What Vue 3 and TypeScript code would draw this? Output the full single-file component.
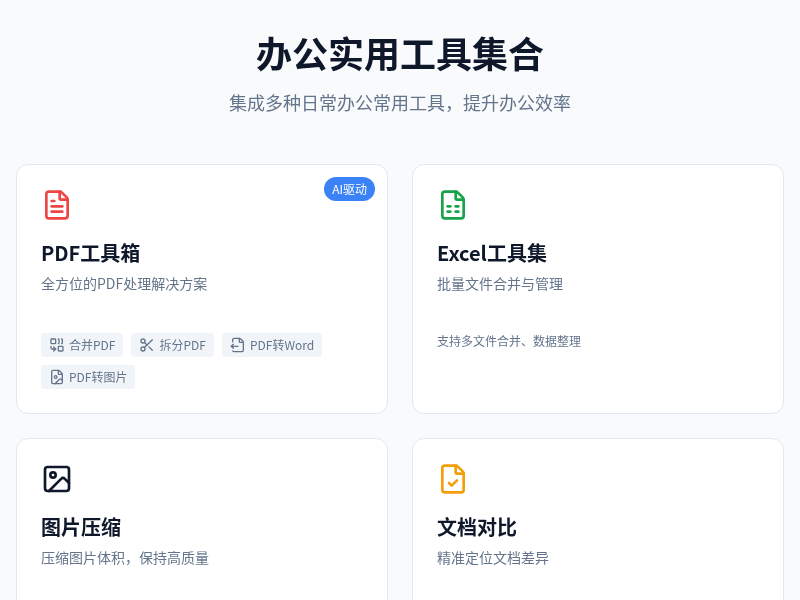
<script setup lang="ts">
interface Tag { label: string; icon: string }
interface Tool { title: string; desc: string; color: string; icon: string; badge?: string; tags?: Tag[]; note?: string }

const doc = '<path d="M6 22a2 2 0 0 1-2-2V4a2 2 0 0 1 2-2h8a2.4 2.4 0 0 1 1.704.706l3.59 3.588A2.4 2.4 0 0 1 20 8v12a2 2 0 0 1-2 2z"/><path d="M14 2v5a1 1 0 0 0 1 1h5"/>'

const tools: Tool[] = [
  {
    title: 'PDF工具箱',
    desc: '全方位的PDF处理解决方案',
    color: '#ef4444',
    badge: 'AI驱动',
    icon: doc + '<path d="M10 9H8"/><path d="M16 13H8"/><path d="M16 17H8"/>',
    tags: [
      { label: '合并PDF', icon: '<path d="M14 3a1 1 0 0 1 1 1v5a1 1 0 0 1-1 1"/><path d="M19 3a1 1 0 0 1 1 1v5a1 1 0 0 1-1 1"/><path d="m7 15 3 3"/><path d="m7 21 3-3H5a2 2 0 0 1-2-2v-2"/><rect x="14" y="14" width="7" height="7" rx="1"/><rect x="3" y="3" width="7" height="7" rx="1"/>' },
      { label: '拆分PDF', icon: '<circle cx="6" cy="6" r="3"/><path d="M8.12 8.12 12 12"/><path d="M20 4 8.12 15.88"/><circle cx="6" cy="18" r="3"/><path d="M14.8 14.8 20 20"/>' },
      { label: 'PDF转Word', icon: '<path d="M4.226 20.925A2 2 0 0 0 6 22h12a2 2 0 0 0 2-2V8a2.4 2.4 0 0 0-.706-1.706l-3.588-3.588A2.4 2.4 0 0 0 14 2H6a2 2 0 0 0-2 2v3.127"/><path d="M14 2v5a1 1 0 0 0 1 1h5"/><path d="m5 11-3 3"/><path d="m5 17-3-3h10"/>' },
      { label: 'PDF转图片', icon: doc + '<circle cx="10" cy="12" r="2"/><path d="m20 17-1.296-1.296a2.41 2.41 0 0 0-3.408 0L9 22"/>' },
    ],
  },
  {
    title: 'Excel工具集',
    desc: '批量文件合并与管理',
    color: '#16a34a',
    icon: doc + '<path d="M8 13h2"/><path d="M14 13h2"/><path d="M8 17h2"/><path d="M14 17h2"/>',
    note: '支持多文件合并、数据整理',
  },
  {
    title: '图片压缩',
    desc: '压缩图片体积，保持高质量',
    color: '#0f172a',
    icon: '<rect x="3" y="3" width="18" height="18" rx="2"/><circle cx="9" cy="9" r="2"/><path d="m21 15-3.086-3.086a2 2 0 0 0-2.828 0L6 21"/>',
  },
  {
    title: '文档对比',
    desc: '精准定位文档差异',
    color: '#f59e0b',
    icon: doc + '<path d="m9 15 2 2 4-4"/>',
  },
]
</script>

<template>
  <main class="page">
    <header class="head">
      <h1>办公实用工具集合</h1>
      <p>集成多种日常办公常用工具，提升办公效率</p>
    </header>
    <section class="grid">
      <article v-for="t in tools" :key="t.title" class="card">
        <span v-if="t.badge" class="badge">{{ t.badge }}</span>
        <svg class="icon" width="32" height="32" viewBox="0 0 24 24" fill="none" :stroke="t.color" stroke-width="2" stroke-linecap="round" stroke-linejoin="round" v-html="t.icon"></svg>
        <h2>{{ t.title }}</h2>
        <p class="desc">{{ t.desc }}</p>
        <div v-if="t.tags" class="tags">
          <span v-for="g in t.tags" :key="g.label" class="tag">
            <svg width="16" height="16" viewBox="0 0 24 24" fill="none" stroke="currentColor" stroke-width="2" stroke-linecap="round" stroke-linejoin="round" v-html="g.icon"></svg>
            {{ g.label }}
          </span>
        </div>
        <p v-if="t.note" class="note">{{ t.note }}</p>
      </article>
    </section>
  </main>
</template>

<style>
html, body { background: #f8fafc; }
</style>

<style scoped>
.page {
  padding: 24px 16px;
  background: #f8fafc;
  font-family: "Noto Sans CJK SC", "Noto Sans", sans-serif;
  color: #0f172a;
  will-change: transform;
}
.head { text-align: center; margin-bottom: 49px; }
h1 { margin: 0 0 9px; font-size: 36px; line-height: 56px; font-weight: 700; }
.head p { margin: 0; font-size: 18px; line-height: 26px; color: #64748b; }
.grid { display: grid; grid-template-columns: 1fr 1fr; gap: 24px; }
.card {
  position: relative;
  box-sizing: border-box;
  display: flex;
  flex-direction: column;
  min-height: 250px;
  padding: 24px;
  background: #fff;
  border: 1px solid #e2e8f0;
  border-radius: 12px;
}
.badge {
  position: absolute;
  top: 12px;
  right: 12px;
  padding: 4px 8px;
  border-radius: 12px;
  background: #3b82f6;
  color: #fff;
  font-size: 12px;
  line-height: 16px;
}
.icon { display: block; margin-bottom: 16px; }
h2 { margin: 0 0 4px; font-size: 20px; line-height: 32px; font-weight: 600; }
.desc { margin: 0; font-size: 14px; line-height: 21px; color: #64748b; }
.tags { display: flex; flex-wrap: wrap; gap: 8px; margin-top: auto; }
.tag {
  display: inline-flex;
  align-items: center;
  gap: 4px;
  padding: 4px 8px;
  border-radius: 4px;
  background: #f1f5f9;
  color: #64748b;
  font-size: 12px;
  line-height: 16px;
}
.note { margin: 0; padding-top: 38px; font-size: 12px; line-height: 18px; color: #64748b; }
</style>
